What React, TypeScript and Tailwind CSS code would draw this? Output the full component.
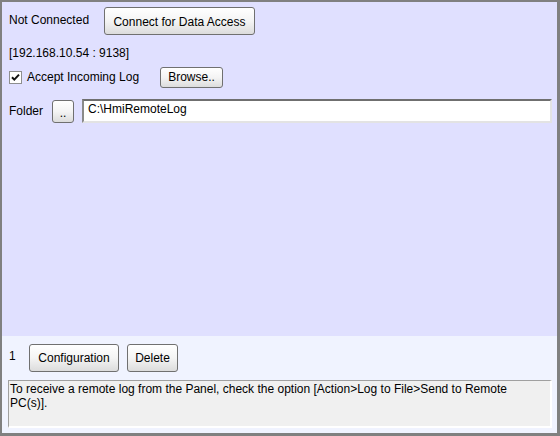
const btn =
  "flex items-center justify-center border border-[#707070] rounded-[3px] bg-linear-to-b from-white via-[#f4f4f4] to-[#dcdcdc] text-black";

const App: React.FC = () => {
  return (
    <div className="w-[560px] h-[436px] flex flex-col border-t-2 border-l-2 border-r-[3px] border-b-[3px] border-[#808080] font-['Liberation_Sans',Arial,sans-serif] text-[12px] leading-[14px] text-black">
      {/* Main panel */}
      <div className="h-[334px] bg-[#e0e0ff] pl-[7px] pr-[5px] pt-[5px] flex flex-col">
        <div className="flex items-start h-[28px]">
          <span className="w-[95px] mt-[6px]">Not Connected</span>
          <button className={`${btn} w-[151px] h-[28px] pt-[1px]`}>Connect for Data Access</button>
        </div>

        <div className="mt-[11px]">[192.168.10.54 : 9138]</div>

        <div className="flex items-center h-[22px] mt-[6px]">
          <svg width="13" height="13" viewBox="0 0 13 13" className="shrink-0">
            <rect x="0.5" y="0.5" width="12" height="12" fill="#fff" stroke="#8e8f8f" />
            <path d="M3 6.2 L5.3 8.6 L10 3.6" fill="none" stroke="#111" strokeWidth="2" />
          </svg>
          <span className="ml-[5px] w-[133px]">Accept Incoming Log</span>
          <button className={`${btn} w-[63px] h-[21px]`}>Browse..</button>
        </div>

        <div className="flex items-center h-[24px] mt-[11px]">
          <span className="w-[43px]">Folder</span>
          <button className={`${btn} w-[22px] h-[23px] pt-[3px]`}>..</button>
          <div className="ml-[8px] flex-1 h-[24px] bg-white border-2 border-t-[#6f6f6f] border-l-[#8a8a8a] border-b-[#e3e3e3] border-r-[#e3e3e3] pl-[4px] pt-[1px]">
            C:\HmiRemoteLog
          </div>
        </div>
      </div>

      {/* Bottom panel */}
      <div className="flex-1 bg-[#f0f3ff] pl-[6px] pr-[5px] pt-[8px] flex flex-col">
        <div className="flex items-start h-[28px] pl-[1px]">
          <span className="w-[20px] mt-[5px]">1</span>
          <button className={`${btn} w-[90px] h-[28px]`}>Configuration</button>
          <button className={`${btn} w-[51px] h-[28px] ml-[8px]`}>Delete</button>
        </div>

        <div className="mt-[8px] h-[48px] bg-[#f0f0f0] border border-t-[#a0a0a0] border-l-[#a0a0a0] border-b-white border-r-white border-b-2 border-r-2 pl-[1px] pt-[1px] pr-[8px]">
          To receive a remote log from the Panel, check the option [Action&gt;Log to File&gt;Send to Remote PC(s)].
        </div>
      </div>
    </div>
  );
};

export default App;
